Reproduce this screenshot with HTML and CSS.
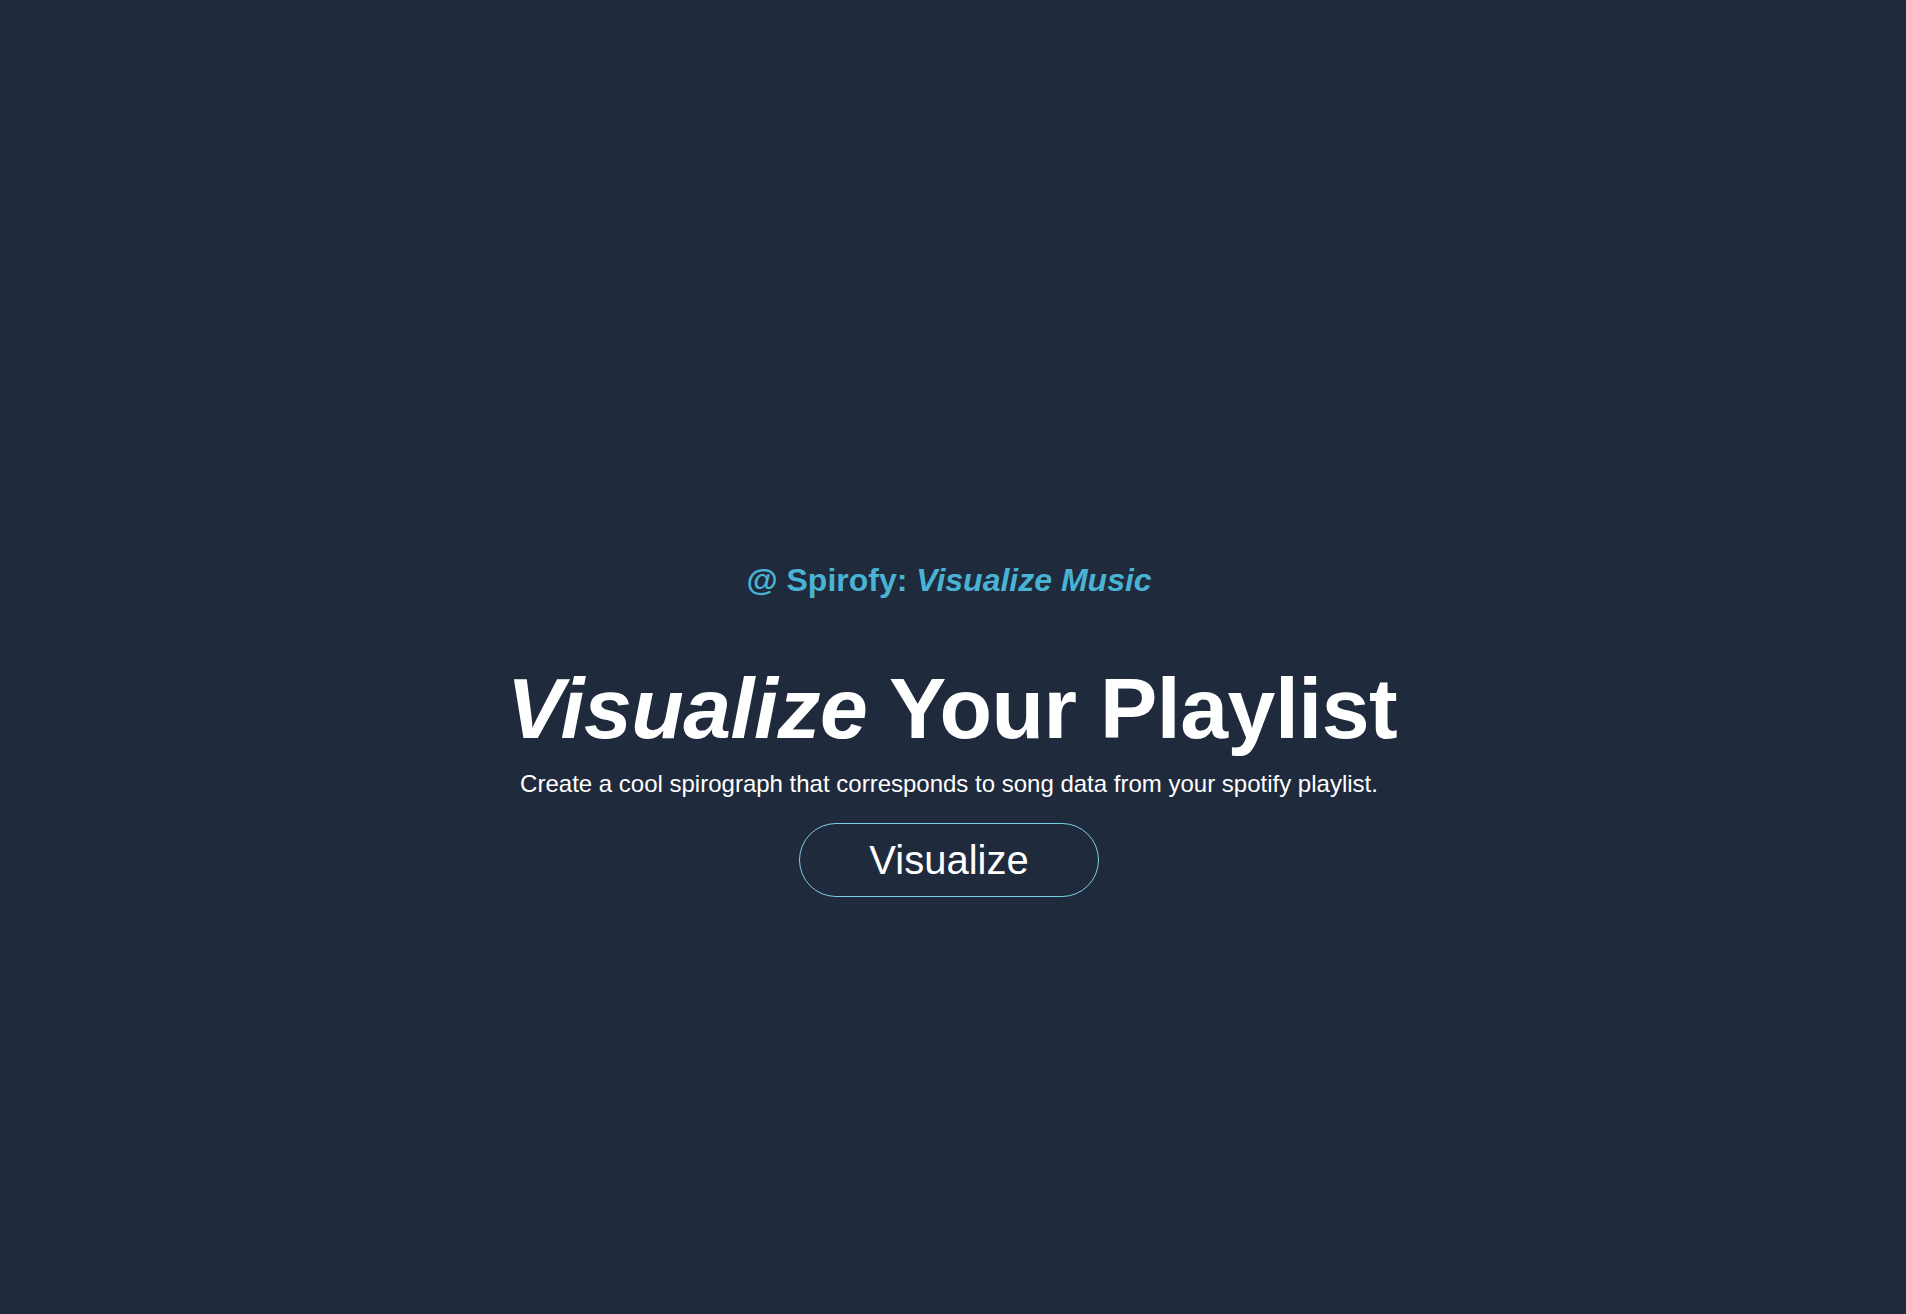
FILE: index.html
```html
<!DOCTYPE html>
<html lang="en">
<head>
<meta charset="utf-8">
<title>Spirofy</title>
<link rel="stylesheet" href="styles.css">
</head>
<body>
<main class="hero">
  <p class="tagline">@ Spirofy: <em>Visualize Music</em></p>
  <h1 class="title"><em>Visualize</em> Your Playlist</h1>
  <p class="subtitle">Create a cool spirograph that corresponds to song data from your spotify playlist.</p>
  <button class="cta" type="button">Visualize</button>
</main>
</body>
</html>
```
FILE: styles.css
```css
html, body {
  margin: 0;
  padding: 0;
  height: 100%;
}
body {
  background: #1f2a3c;
  color: #ffffff;
  font-family: "Liberation Sans", Arial, Helvetica, sans-serif;
}
.hero {
  display: flex;
  flex-direction: column;
  align-items: center;
  padding-top: 560px;
  padding-right: 8px;
}
.tagline {
  margin: 0;
  font-size: 32px;
  font-weight: 700;
  color: #4ab3d4;
  line-height: 40px;
}
.tagline em {
  font-style: italic;
}
.title {
  margin: 64px 0 0;
  padding-left: 6px;
  font-size: 86px;
  font-weight: 700;
  line-height: 88px;
  letter-spacing: -0.5px;
}
.subtitle {
  margin: 16px 0 0;
  font-size: 24px;
  line-height: 32px;
}
.cta {
  margin-top: 23px;
  width: 300px;
  height: 74px;
  padding: 0;
  border: 1px solid #7fd0e6;
  border-radius: 37px;
  background: transparent;
  color: #ffffff;
  font-family: inherit;
  font-size: 40px;
  line-height: 46px;
  cursor: pointer;
}
```
